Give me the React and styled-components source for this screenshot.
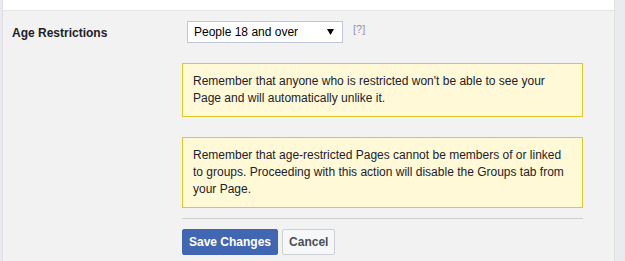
import React from "react";
import styled, { createGlobalStyle } from "styled-components";

const GlobalStyle = createGlobalStyle`
  body {
    margin: 0;
    background-color: #e9ebee;
    font-family: "Liberation Sans", Arial, sans-serif;
    font-size: 12px;
    color: #1d2129;
  }
`;

const Frame = styled.div`
  width: 611px;
  height: 261px;
  margin-left: 2px;
  border-left: 1px solid #dddfe2;
  border-right: 1px solid #dddfe2;
  background-color: #f2f2f2;
`;

const TopStrip = styled.div`
  height: 10px;
  background-color: #fff;
  border-bottom: 1px solid #e5e5e5;
`;

const Row = styled.div`
  display: flex;
  padding-top: 10px;
`;

const Label = styled.div`
  width: 170px;
  padding: 4px 0 0 9px;
  font-weight: bold;
  line-height: 16px;
  color: #1d2129;
`;

const Content = styled.div`
  width: 401px;
  display: flex;
  flex-direction: column;
`;

const SelectLine = styled.div`
  display: flex;
  align-items: flex-start;
  padding-left: 5px;
`;

const SelectBox = styled.div`
  width: 154px;
  height: 20px;
  border: 1px solid #bdc7d8;
  background-color: #fff;
  display: flex;
  align-items: center;
  justify-content: space-between;
  padding: 0 8px 0 6px;
  box-sizing: border-box;
  width: 156px;
  height: 22px;
  color: #000;
  font-size: 12px;
`;

const Help = styled.span`
  margin-left: 10px;
  margin-top: 2px;
  color: #9197a3;
  font-size: 11px;
`;

const Notice = styled.div`
  margin-top: ${props => props.gap}px;
  background-color: #fff9d7;
  border: 1px solid #e2c822;
  padding: 9px 10px;
  line-height: 17px;
  color: #1d2129;
`;

const Divider = styled.div`
  margin-top: 10px;
  border-top: 1px solid #ccd0d5;
`;

const Actions = styled.div`
  display: flex;
  gap: 4px;
  margin-top: 10px;
`;

const Button = styled.button`
  height: 26px;
  padding: 0 6px;
  font-family: inherit;
  font-size: 12px;
  font-weight: bold;
  border-radius: 2px;
  border: 1px solid ${props => (props.primary ? "#4267b2" : "#ced0d4")};
  background-color: ${props => (props.primary ? "#4267b2" : "#f6f7f9")};
  color: ${props => (props.primary ? "#fff" : "#4b4f56")};
  cursor: pointer;
`;

export default function App() {
  return (
    <>
      <GlobalStyle />
      <Frame>
        <TopStrip />
        <Row>
          <Label>Age Restrictions</Label>
          <Content>
            <SelectLine>
              <SelectBox>
                <span>People 18 and over</span>
                <svg width="7" height="6" viewBox="0 0 7 6">
                  <path d="M0 0 L7 0 L3.5 6 Z" fill="#000" />
                </svg>
              </SelectBox>
              <Help>[?]</Help>
            </SelectLine>
            <Notice gap={20}>
              Remember that anyone who is restricted won't be able to see your Page and will automatically unlike it.
            </Notice>
            <Notice gap={20}>
              Remember that age-restricted Pages cannot be members of or linked to groups. Proceeding with this action will disable the Groups tab from your Page.
            </Notice>
            <Divider />
            <Actions>
              <Button primary>Save Changes</Button>
              <Button>Cancel</Button>
            </Actions>
          </Content>
        </Row>
      </Frame>
    </>
  );
}
